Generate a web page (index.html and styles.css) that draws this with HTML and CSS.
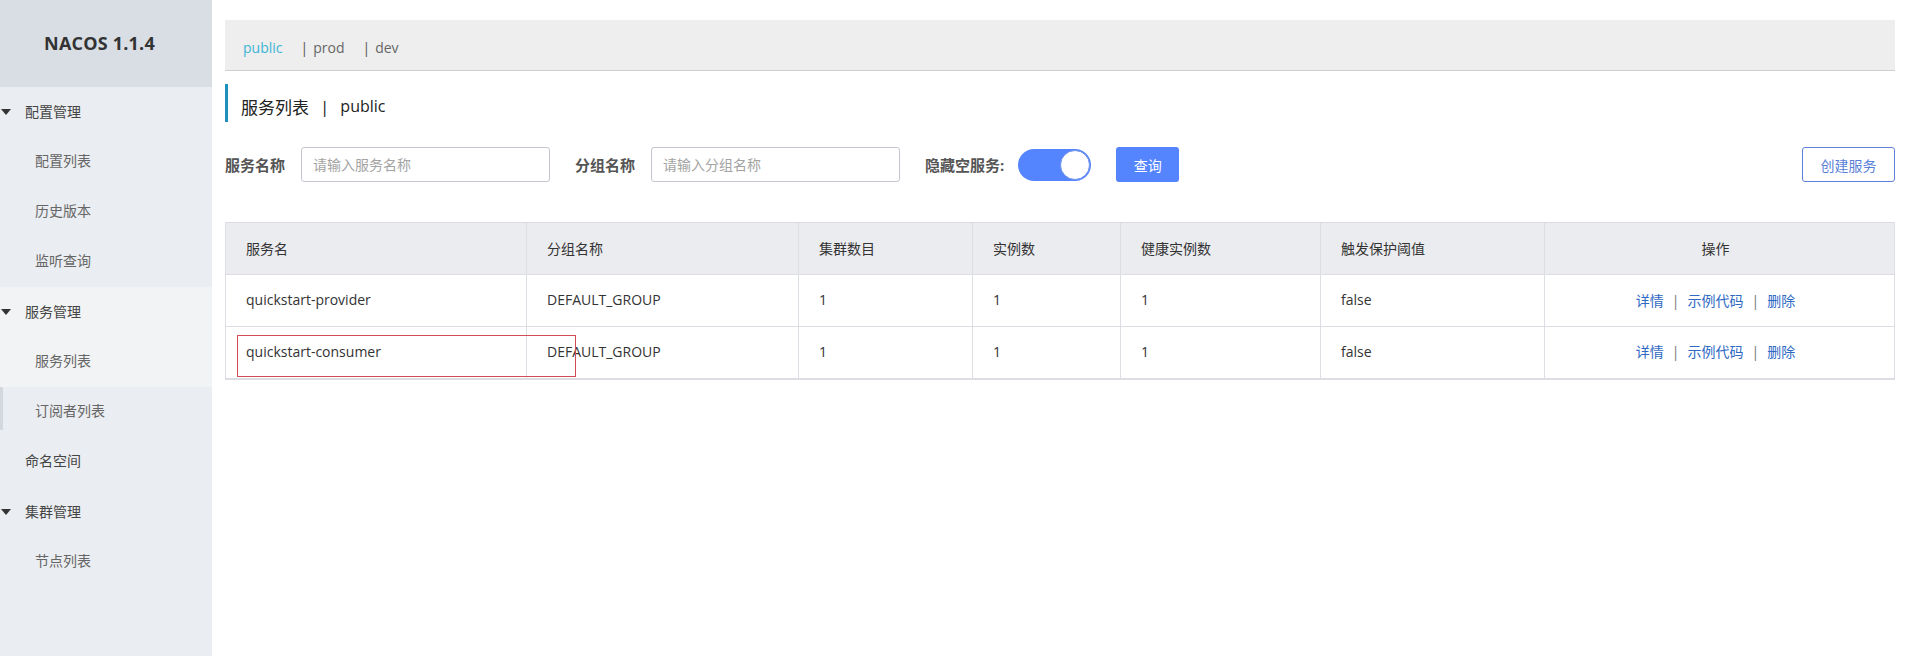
FILE: index.html
```html
<!DOCTYPE html>
<html lang="zh-CN">
<head>
<meta charset="utf-8">
<title>Nacos</title>
<link rel="stylesheet" href="styles.css">
</head>
<body>
<div class="app">
  <aside class="sidebar">
    <div class="brand">NACOS 1.1.4</div>
    <ul class="menu">
      <li class="group"><span class="caret"></span>配置管理</li>
      <li class="sub">配置列表</li>
      <li class="sub">历史版本</li>
      <li class="sub">监听查询</li>
      <li class="group hl"><span class="caret"></span>服务管理</li>
      <li class="sub hl">服务列表</li>
      <li class="sub marked">订阅者列表</li>
      <li class="plain">命名空间</li>
      <li class="group"><span class="caret"></span>集群管理</li>
      <li class="sub">节点列表</li>
    </ul>
  </aside>

  <main class="main">
    <div class="ns-bar">
      <span class="ns active">public</span>
      <span class="ns"><span class="ns-sep">|</span>prod</span>
      <span class="ns"><span class="ns-sep">|</span>dev</span>
    </div>

    <div class="page-title">
      <span>服务列表</span><span class="title-sep">|</span><span class="title-ns">public</span>
    </div>

    <div class="search">
      <label class="field-label">服务名称</label>
      <input class="input" type="text" placeholder="请输入服务名称">
      <label class="field-label">分组名称</label>
      <input class="input" type="text" placeholder="请输入分组名称">
      <label class="field-label">隐藏空服务:</label>
      <span class="switch"><span class="knob"></span></span>
      <button class="btn primary">查询</button>
      <span class="spacer"></span>
      <button class="btn outline">创建服务</button>
    </div>

    <div class="table-wrap">
      <table class="grid">
        <colgroup>
          <col class="w1"><col class="w2"><col class="w3"><col class="w4"><col class="w5"><col class="w6"><col class="w7">
        </colgroup>
        <thead>
          <tr>
            <th>服务名</th>
            <th>分组名称</th>
            <th>集群数目</th>
            <th>实例数</th>
            <th>健康实例数</th>
            <th>触发保护阈值</th>
            <th class="center">操作</th>
          </tr>
        </thead>
        <tbody>
          <tr>
            <td>quickstart-provider</td>
            <td>DEFAULT_GROUP</td>
            <td>1</td>
            <td>1</td>
            <td>1</td>
            <td>false</td>
            <td class="center"><a class="lnk">详情</a><span class="bar">|</span><a class="lnk">示例代码</a><span class="bar">|</span><a class="lnk">删除</a></td>
          </tr>
          <tr>
            <td>quickstart-consumer</td>
            <td>DEFAULT_GROUP</td>
            <td>1</td>
            <td>1</td>
            <td>1</td>
            <td>false</td>
            <td class="center"><a class="lnk">详情</a><span class="bar">|</span><a class="lnk">示例代码</a><span class="bar">|</span><a class="lnk">删除</a></td>
          </tr>
        </tbody>
      </table>
      <div class="mark"></div>
    </div>
  </main>
</div>
</body>
</html>
```

FILE: styles.css
```css
* { box-sizing: border-box; }
html, body { margin: 0; padding: 0; }
body {
  font-family: "Open Sans", "Noto Sans CJK SC", sans-serif;
  font-size: 14px;
  color: #333;
  background: #fff;
  width: 1907px;
  height: 656px;
  overflow: hidden;
}
.app { display: flex; height: 656px; }

/* sidebar */
.sidebar {
  width: 212px;
  flex: 0 0 212px;
  background: #eaedf1;
  height: 100%;
}
.brand {
  height: 87px;
  line-height: 87px;
  background: #d9dee5;
  font-weight: 700;
  font-size: 18px;
  color: #333;
  text-align: center;
  padding-right: 13px;
  letter-spacing: 0.2px;
}
.menu { list-style: none; margin: 0; padding: 0; }
.menu li {
  height: 50px;
  line-height: 48px;
  font-size: 14px;
  position: relative;
}
.menu .group { padding-left: 1px; color: #444; display: flex; align-items: center; }
.menu .plain { padding-left: 25px; color: #444; }
.menu .sub { padding-left: 35px; color: #666; }
.menu .hl { background: #f2f3f5; }
.menu .marked::before {
  content: "";
  position: absolute;
  left: 0; top: 0;
  width: 3px; height: 43px;
  background: #d3d8df;
}
.caret {
  display: inline-block;
  width: 0; height: 0;
  border-left: 5px solid transparent;
  border-right: 5px solid transparent;
  border-top: 6px solid #333;
  margin-right: 14px;
}

/* main */
.main {
  flex: 1;
  padding: 20px 12px 0 13px;
  min-width: 0;
}
.ns-bar {
  height: 51px;
  background: #eeeeee;
  border-bottom: 1px solid #cfcfcf;
  padding-left: 18px;
  padding-top: 4px;
  display: flex;
  align-items: center;
  font-size: 14px;
  color: #666;
}
.ns { margin-right: 18px; }
.ns.active { color: #3cb5d6; }
.ns-sep { margin-right: 5px; color: #555; }

.page-title {
  margin-top: 13px;
  height: 38px;
  border-left: 3px solid #1f8fbd;
  padding-left: 13px;
  padding-top: 6px;
  display: flex;
  align-items: center;
  font-size: 17px;
  color: #222;
}
.title-sep { margin: 0 11px; }
.title-ns { font-size: 16px; }

.search {
  margin-top: 25px;
  height: 35px;
  display: flex;
  align-items: center;
}
.field-label {
  font-weight: 700;
  color: #555;
  font-size: 15px;
  margin-right: 16px;
}
.input {
  width: 249px;
  height: 35px;
  border: 1px solid #c4c6cf;
  border-radius: 3px;
  padding: 0 11px;
  font-family: inherit;
  font-size: 14px;
  color: #333;
  margin-right: 25px;
  outline: none;
}
.input::placeholder { color: #a3a3a3; }
.switch {
  width: 73px;
  height: 32px;
  border-radius: 16px;
  background: #5584ff;
  position: relative;
  margin-right: 25px;
  margin-left: -2px;
}
.knob {
  position: absolute;
  right: 1px; top: 1px;
  width: 30px; height: 30px;
  border-radius: 50%;
  background: #fff;
  border: 1px solid #6b8fe8;
}
.btn {
  height: 35px;
  border-radius: 3px;
  font-family: inherit;
  font-size: 14px;
  cursor: pointer;
}
.btn.primary {
  width: 63px;
  background: #5584ff;
  color: #fff;
  border: none;
}
.btn.outline {
  width: 93px;
  background: #fff;
  color: #5a7fd6;
  border: 1px solid #5f82d8;
}
.spacer { flex: 1; }

/* table */
.table-wrap {
  margin-top: 40px;
  position: relative;
}
.grid {
  width: 100%;
  table-layout: fixed;
  border-collapse: collapse;
  border: 1px solid #dcdee3;
  border-bottom: 2px solid #dcdee3;
}
.w1 { width: 301px; }
.w2 { width: 272px; }
.w3 { width: 174px; }
.w4 { width: 148px; }
.w5 { width: 200px; }
.w6 { width: 224px; }
.w7 { width: 350px; }
.grid th, .grid td {
  border: 1px solid #dcdee3;
  text-align: left;
  padding: 0 0 2px 20px;
  font-weight: 400;
  font-size: 14px;
  white-space: nowrap;
}
.grid th {
  height: 52px;
  background: #ebecf0;
  color: #333;
}
.grid td {
  height: 52px;
  color: #333;
  background: #fff;
}
.grid .center { text-align: center; padding: 0 8px 2px 0; }
.lnk { color: #2f69c3; text-decoration: none; }
.bar { color: #777; margin: 0 8px; }

.mark {
  position: absolute;
  left: 12px;
  top: 113px;
  width: 339px;
  height: 42px;
  border: 1px solid #d24b55;
  pointer-events: none;
}
```
